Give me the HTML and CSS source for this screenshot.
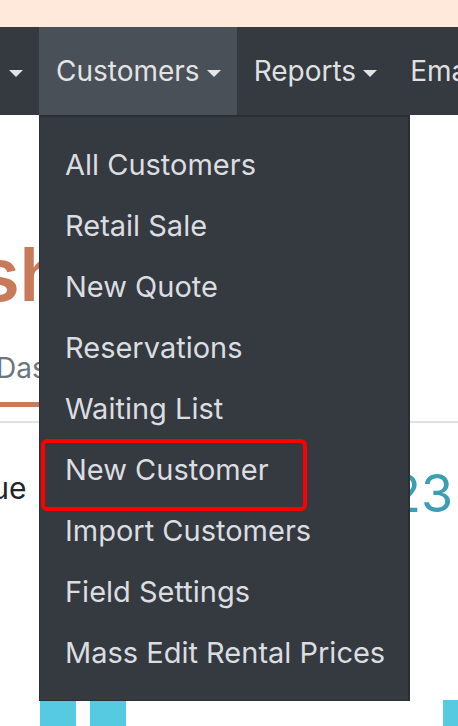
FILE: index.html
```html
<!DOCTYPE html>
<html lang="en">
<head>
    <meta charset="UTF-8">
    <meta name="viewport" content="width=device-width, initial-scale=1.0">
    <title>Customers</title>
    <link rel="stylesheet" href="styles.css">
</head>
<body>
    <div class="notice-bar"></div>

    <nav class="navbar">
        <div class="nav-item nav-item-clipped">
            <span class="nav-link">Inventory<span class="caret"></span></span>
        </div>
        <div class="nav-item active">
            <span class="nav-link">Customers<span class="caret"></span></span>
            <ul class="dropdown-menu">
                <li class="dropdown-item">All Customers</li>
                <li class="dropdown-item">Retail Sale</li>
                <li class="dropdown-item">New Quote</li>
                <li class="dropdown-item">Reservations</li>
                <li class="dropdown-item">Waiting List</li>
                <li class="dropdown-item">New Customer</li>
                <li class="dropdown-item">Import Customers</li>
                <li class="dropdown-item">Field Settings</li>
                <li class="dropdown-item">Mass Edit Rental Prices</li>
            </ul>
            <div class="highlight-box"></div>
        </div>
        <div class="nav-item">
            <span class="nav-link">Reports<span class="caret"></span></span>
        </div>
        <div class="nav-item">
            <span class="nav-link">Email</span>
        </div>
    </nav>

    <main class="content">
        <h1 class="page-title">Dashboard</h1>

        <ul class="tabs">
            <li class="tab active">Dashboard</li>
        </ul>
        <hr class="divider">

        <div class="stat-row">
            <span class="stat-label">Revenue</span>
            <span class="stat-value">123</span>
        </div>

        <div class="chart">
            <div class="bar"></div>
            <div class="bar"></div>
            <div class="bar bar-far"></div>
        </div>
    </main>
</body>
</html>
```

FILE: styles.css
```css
body {
    margin: 0;
    font-family: 'Inter', 'Noto Sans', sans-serif;
    background: #fff;
    overflow: hidden;
    width: 458px;
    height: 726px;
}

.notice-bar {
    height: 27px;
    background: #fee9da;
}

.navbar {
    display: flex;
    height: 88px;
    background: #343a40;
    position: relative;
    z-index: 2;
}

.nav-item {
    position: relative;
    display: flex;
    align-items: center;
    padding: 0 16px 0 17px;
    flex-shrink: 0;
}

.nav-item.active {
    background: #4a5058;
}

.nav-item-clipped {
    width: 39px;
    box-sizing: border-box;
    justify-content: flex-end;
    overflow: hidden;
}

.nav-item-clipped .caret {
    margin-left: 14px;
}

.nav-link {
    font-size: 28px;
    line-height: 34px;
    color: rgba(255, 255, 255, 0.86);
    white-space: nowrap;
    flex-shrink: 0;
}

.caret {
    display: inline-block;
    margin-left: 7px;
    vertical-align: 4px;
    border-top: 7px solid rgba(255, 255, 255, 0.86);
    border-left: 7px solid transparent;
    border-right: 7px solid transparent;
}

.dropdown-menu {
    position: absolute;
    top: 100%;
    left: 0;
    width: 371px;
    box-sizing: border-box;
    margin: 0;
    padding: 17px 0;
    list-style: none;
    background: #343a40;
    border: 1px solid #2a2f34;
    border-right-width: 2px;
    border-top-width: 2px;
}

.dropdown-item {
    padding: 0 25px;
    font-size: 29px;
    line-height: 61px;
    color: #dcdde0;
    white-space: nowrap;
}

.highlight-box {
    position: absolute;
    left: 2px;
    top: 412px;
    width: 266px;
    height: 72px;
    box-sizing: border-box;
    border: 4px solid #ff0000;
    border-radius: 6px;
}

.content {
    position: relative;
    z-index: 1;
}

.page-title {
    margin: 114px 0 0 -117px;
    font-size: 74px;
    line-height: 90px;
    font-weight: 600;
    color: #c97a5b;
    white-space: nowrap;
}

.tabs {
    display: flex;
    list-style: none;
    margin: 29px 0 0 -20px;
    padding: 0;
}

.tab {
    padding: 0 16px 14px;
    font-size: 28px;
    line-height: 40px;
    color: #6c757d;
    border-bottom: 5px solid #c97a5b;
}

.divider {
    margin: 14px 0 0;
    border: 0;
    height: 2px;
    background: #dee2e6;
}

.stat-row {
    display: flex;
    justify-content: space-between;
    align-items: flex-start;
    margin-top: 41px;
}

.stat-label {
    margin: 7px 0 0 -96px;
    font-size: 30px;
    line-height: 34px;
    color: #212529;
}

.stat-value {
    padding-right: 5px;
    font-size: 52px;
    line-height: 60px;
    color: #3c9db3;
}

.chart {
    display: flex;
    align-items: flex-start;
    gap: 14px;
    height: 60px;
    margin-top: 173px;
    padding-left: 40px;
}

.bar {
    width: 36px;
    height: 60px;
    background: #55cae0;
}

.bar-far {
    margin-left: auto;
    margin-top: 3px;
    margin-right: -21px;
}
```
